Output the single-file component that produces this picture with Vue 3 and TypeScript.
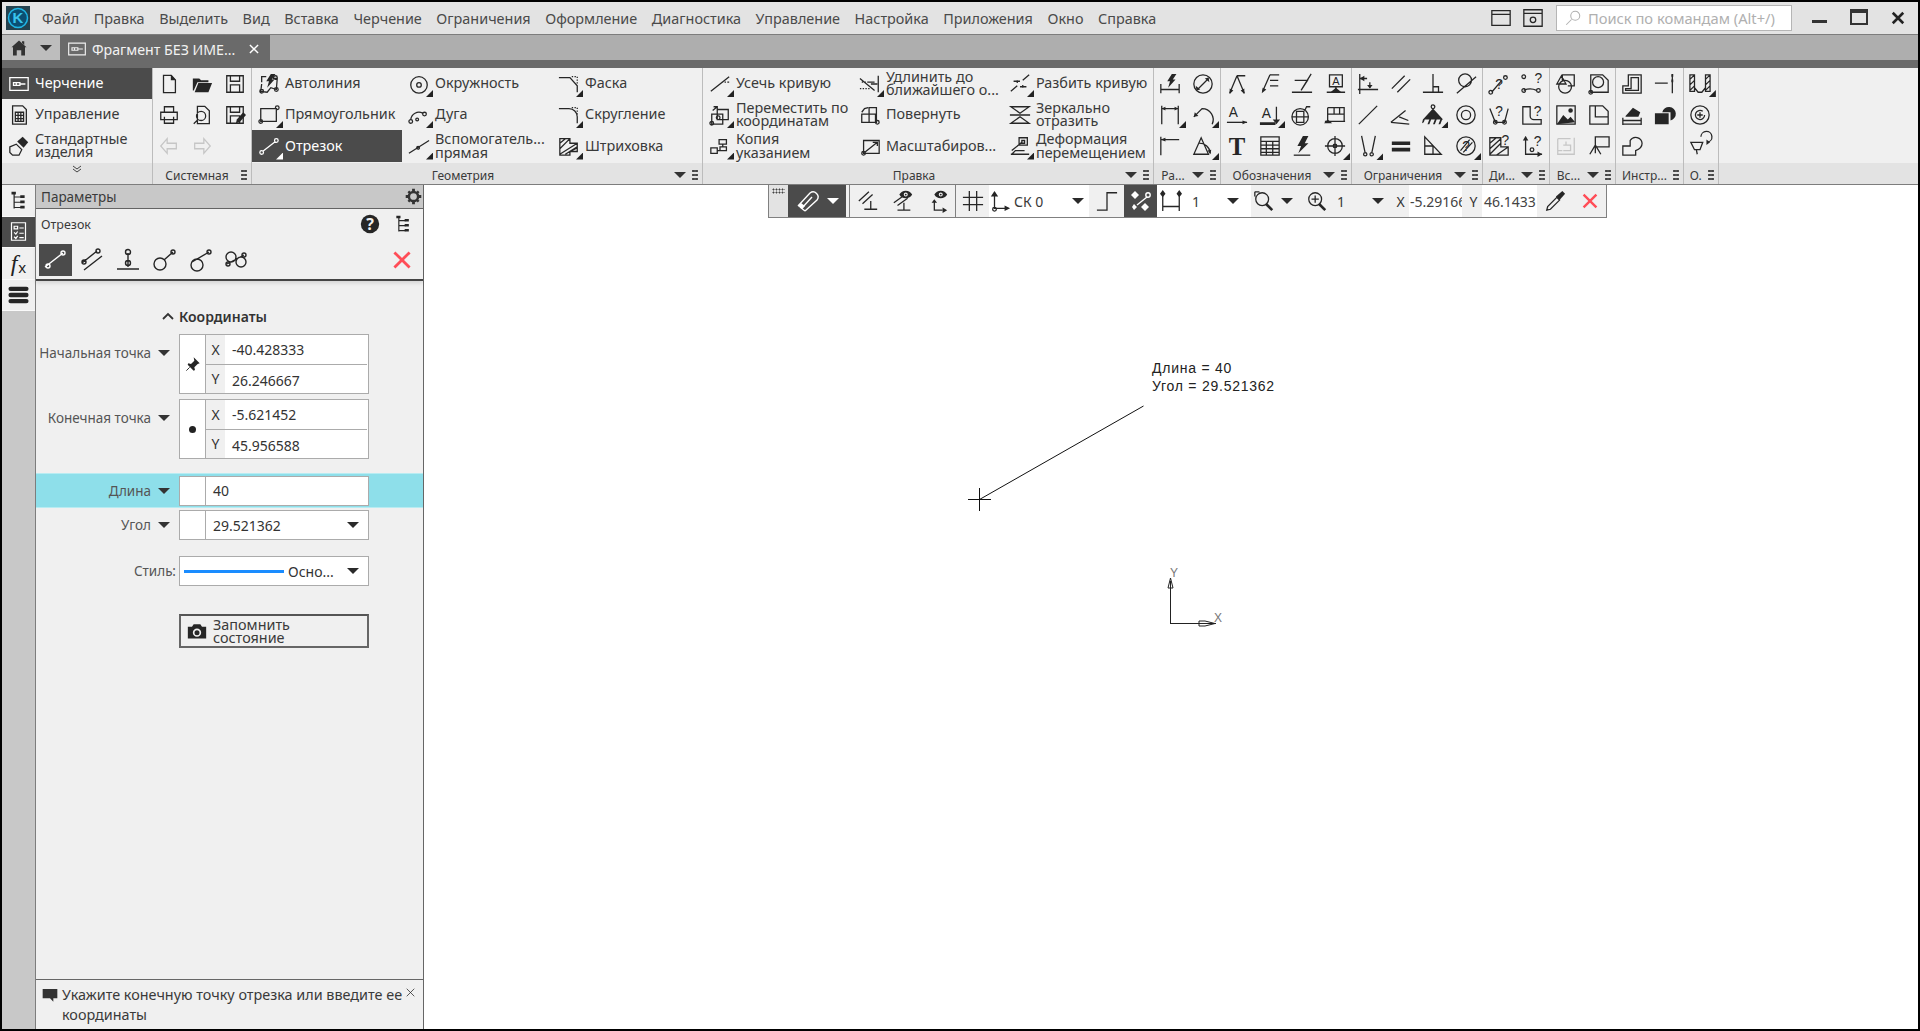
<script setup lang="ts">
import { h } from 'vue'

interface Glyph {
  s?: string
  f?: string
  t?: [string, number, number, number, string?][]
}

const o = (x: number, y: number, r: number) =>
  `M${x - r} ${y}a${r} ${r} 0 1 0 ${2 * r} 0a${r} ${r} 0 1 0 ${-2 * r} 0`

const bolt = 'M14 1h5l-4 6h3l-8 9 2-7h-3z'
const saveBody = 'M3 3h18v18H3zM7 3v6h10V3M7 21v-8h10v8'
const corner = 'M15 4h1.500M18 4h1.500M21 4v1.500M21 7v1.500M21 10v1.500'
const eye = 'M8 5a8 8 0 0 1 14 0 8 8 0 0 1-14 0z' + o(15, 5, 2.200) + o(15, 5, 1)

const glyphs: Record<string, Glyph> = {
  draw: { s: 'M2 5h20v14H2zM6 10.500h7v3H6zM13 12h6M9 10.500v3' },
  manage: { s: 'M5 2h11l4 4v16H5zM8 9h9v10H8zM8 12.500h9M8 16h9M11 9v10M14 9v10' },
  bolt2: { s: 'M2 13l7-3 6 6-3 6H5l-3-3z', f: 'M10 7l6-5 6 6-5 6z' },
  tree: { s: 'M7 3v18M7 8h8M7 14h8M7 20h8', f: 'M4 2h5v3H4zM14 6h5v3h-5zM14 12h5v3h-5zM14 18h5v3h-5z' },
  list: { s: 'M4 2h16v20H4zM7 6h4v3H7zM13 8h5M7 13l2 2 2-3M13 14h5M7 18l2 2 2-3M13 19h5' },
  stack: { f: 'M3 3h18a2 2 0 0 1 0 5H3a2 2 0 0 1 0-5zM3 10h18a2 2 0 0 1 0 5H3a2 2 0 0 1 0-5zM3 17h18a2 2 0 0 1 0 5H3a2 2 0 0 1 0-5z' },
  doc: { s: 'M6 2.500h8.500l4.500 5v14H6z', f: 'M14 2l5.500 6H14z' },
  folder: { f: 'M2 6h7l2 2h8v2H7l-4 9H2zM8 11h15l-4 10H4z' },
  save: { s: saveBody },
  print: { s: 'M7 9V3h10v6M3 9h18v8H3zM7 14v7h10v-7' },
  preview: { s: 'M7 2.500h8l5 5v14H7z' + o(11, 13, 5) + 'M7.500 17L3 21.500' },
  saveas: { s: saveBody, f: 'M14 17l7-8 3 3-7 8-4 1z' },
  undo: { s: 'M10 4L3 12l7 8v-5h10V9H10z' },
  redo: { s: 'M14 4l7 8-7 8v-5H4V9h10z' },
  auto: { s: 'M4 10V4h5M4 12l-1 8 7 1 4-5 6 2 1-12-5 0' + o(4, 20, 2) + o(20, 18, 2) + o(19, 5, 2), f: bolt },
  rect: { s: 'M3 5h17v14H3z' + o(3, 19, 2) + o(21, 4, 2) },
  line: { s: 'M5 18L19 7' + o(4, 19, 2) + o(20, 6, 2) },
  circle: { s: o(12, 13, 9) + o(12, 13, 2.500) },
  arc: { s: 'M3 17a9 9 0 0 1 13-7' + o(3, 19, 2) + o(18, 11, 2) + o(10, 17, 1.500) },
  helper: { s: 'M1 20L23 6' + o(11, 14, 1.500) },
  chamfer: { s: 'M1 5h12l8 9v7' + corner },
  fillet: { s: 'M1 5h11a9 9 0 0 1 9 9v7' + corner },
  hatch: { s: 'M2 4h11v5h8v9h-8v4H2zM2 9l6-5M2 15L13 4M2 21L21 9M8 21l13-8M13 18l8-4' },
  trim: { s: 'M2 20L12 12M14 10h1.500M17 10h1.500M20 10h2M12 12L22 4' },
  extend: { s: 'M1 6l16 13M1 17h1.500M4 17h1.500M7 17h1.500M10 17h1.500M13 12h7M21 3v18M3 10h1.500M6 10h1.500M9 10h8' },
  split: { s: 'M2 20l7-6M15 8l7-6M9 8v3M5 9h7M15 16v-3M12 15h7' },
  move: { s: 'M9 6h12v11H9zM3 11h12v11H3z' + o(10, 15, 2) + o(3, 21, 2) + 'M4 7l5-4M5 3h4v4' },
  rotate: { s: 'M3 11h15v9H3zM11 4h8v16h-8z' + o(20, 20, 2) + 'M3 9l3-4 4-1' },
  copy: { s: 'M11 5h8v5h-8zM2 14h7v6H2zM12 13h7v4h-7zM15 10v3M9 17h3' },
  scale: { s: 'M5 6h17v14H5z' + o(5, 20, 2) + 'M6 19L20 8M15 8h5v4' },
  mirror: { s: 'M2 3h20L12 10zM2 21h20L12 14zM1 12h22' },
  deform: { s: 'M11 3h9v8h-9zM14 6h3v3h-3zM2 21h20M3 17L14 8M3 21l4-4h10' },
  dimAuto: { s: 'M2 12v10M22 12v10M2 18h20', f: bolt },
  diam: { s: o(12, 12, 10) + 'M6 18L18 6', f: 'M18 5l1 5-5-4zM5 19l-1-5 5 4z' },
  dimLin: { s: 'M3 2v20M21 2v20M3 5h18', f: 'M3 5l4-2v4zM21 5l-4-2v4z' },
  dimRad: { s: 'M2 14L11 5a12 12 0 0 1 11 17', f: 'M2 14l1-5 4 4z' },
  dimBase: { s: 'M2 2v20M2 5h20', f: 'M2 5l5-2v4z' },
  dimAng: { s: 'M2 21h16L10 3zM7 9a12 12 0 0 1 13 11', f: 'M20 21l-3-4 4-1z' },
  rough: { s: 'M12 3h9M12 3L4 22M12 3l8 19', f: 'M4 23l0-6 4 2zM20 23l-4-4 4-2z' },
  leader: { s: 'M12 2L4 20M12 2h10M12 8h9M12 14h9', f: 'M3 22l1-6 4 2z' },
  tick: { s: 'M1 21h22M4 8h14l-7 11M22 1l-11 18' },
  base: { s: 'M6 2h14v13H6zM13 15v4M3 21h20', f: 'M13 16l-6 5h12z', t: [['A', 13, 13, 12]] },
  textA: { s: 'M1 20h22', f: 'M23 20l-5-2v4z', t: [['A', 8, 14, 15]] },
  textB: { s: 'M19 3v17', f: 'M1 20h17v3H1zM19 22l-4-5h8z', t: [['A', 8, 15, 15]] },
  mark: { s: o(10, 14, 9) + 'M6 8h8v12H6zM1 14h18M15 7l2-4h4' },
  flag: { s: 'M4 4h18v15M4 4v15M11 4v7M17 4v7M4 11h18M1 19h22', f: 'M0 21l4-4 5 4z' },
  bigT: { t: [['T', 12, 22, 27]] },
  table: { s: 'M2 2h20v20H2zM2 7h20M2 11h20M2 15h20M2 19h20M8 7v15M15 7v15' },
  boltBase: { s: 'M3 22h18', f: 'M13 1h6l-4 8h4L8 20l3-8H7z' },
  target: { s: o(12, 12, 8) + 'M12 1v22M1 12h22' + o(12, 12, 2) },
  cFix: { s: 'M3 1v22M1 18h22M3 6h8M14 10v6', f: 'M3 6l5-3v6zM14 17l-3-4h6z' },
  cParallel: { s: 'M2 17L16 3M8 21L22 7' },
  cPerp: { s: 'M1 21h22M12 1v20M12 15h6v6' },
  cTangent: { s: o(11, 8, 7) + 'M2 22L23 4' },
  cLine: { s: 'M2 22L22 2' },
  cAngle: { s: 'M1 20L17 7M1 20l20 2M10 14l10 4' },
  cAnchor: { s: o(12, 3, 2), f: 'M12 5L1 17h22zM1 17l-1 4 2-1 1-3zM8 17l-2 5h2l2-5zM14 17l-2 5h2l2-5zM20 17l-2 5h2l2-5z' },
  cRing: { s: o(12, 12, 10) + o(12, 12, 5) },
  cDown: { s: 'M5 1l4 19M20 1l-4 19' + o(9, 21, 1.800) + o(16, 21, 1.800) },
  cEq: { f: 'M2 7h20v4H2zM2 14h20v4H2z' },
  cTri: { s: 'M3 2v19h18zM3 12h9v9' },
  cBadge: { s: o(12, 12, 10) + 'M6 17L16 5M9 19L19 8', t: [['?', 12, 17, 15]] },
  qPoints: { s: 'M4 21L15 8' + o(3, 21, 2) + o(19, 5, 2), t: [['?', 12, 17, 15]] },
  qCurve: { s: 'M3 19a16 16 0 0 1 14 0' + o(3, 4, 2) + o(3, 19, 2) + o(19, 19, 2), t: [['?', 19, 11, 15]] },
  qNet: { s: 'M2 5l6 15h10l4-15' + o(8, 20, 2) + o(18, 20, 2), t: [['?', 12, 13, 15]] },
  qShape: { s: 'M2 3h8v10a4 4 0 0 0 4 4h8v5H2z', t: [['?', 18, 13, 15]] },
  qHatch: { s: 'M2 3h12v10h8v9H2zM2 9l7-6M2 15L14 4M2 21L14 9M9 22l13-9', t: [['?', 19, 11, 15]] },
  qAxes: { s: 'M5 2v19h18' + o(12, 16, 2), f: 'M5 1l3 5H2zM23 21l-5 3v-6z', t: [['?', 18, 12, 15]] },
  vShapes: { s: 'M8 9V2h13v12h-7' + o(11, 15, 7) + 'M2 12l5-9 5 9z' },
  vPage: { s: 'M3 2h13l6 6v13H3z' + o(11, 10, 6) + o(3, 21, 2) },
  vImage: { s: 'M2 2h20v20H2z', f: 'M2 22l7-10 5 5 3-3 5 6z' + o(17, 7, 2.500) },
  vFrag: { s: 'M2 2h14l6 6v14H2zM8 2v12h14' },
  vOff: { s: 'M3 4h14M21 3v18H3V4M9 11h8v6H9M12 11V7M3 17h5' },
  vFlag: { s: 'M8 2h15v11H8zM8 2v18M2 21l6-10 6 10' },
  iOffset: { s: 'M8 2h14v20H2v-8h6zM11 5h8v14H5v-2h6z' },
  iBreak: { s: 'M1 11h14M20 2v20', f: 'M19 1h2v3h-2zM19 7h2v3h-2z' },
  iHatchDim: { s: 'M2 22h20M2 15v8M22 15v8M2 18h20', f: 'M5 13l8-9 8 5-2 5H5z' },
  iSolid: { f: 'M1 10h15v12H1zM9 9a7.500 7.500 0 1 1 9 9V9z' },
  iShape: { s: 'M2 12h8V6a7 7 0 0 1 13 3c0 5-4 7-7 8v5H2z' },
  oHole: { s: 'M1 2h5v18H1zM18 2h5v18h-5zM6 2v14l4 5h4l4-5V2M1 7l5-5M1 13l5-5M1 19l5-5M18 7l5-5M18 13l5-5M18 19l5-5' },
  oSpiral: { s: o(12, 12, 10) + 'M17 12a5 5 0 1 1-2-4M9 12h6M12 9v6' },
  oRot: { s: 'M2 8h13l-3 8H6zM8 16l1 5M13 2a6 6 0 1 1 7 6', f: 'M23 8l-4 3V5z' },
  mStraight: { s: 'M1 19L19 5' + o(4, 18, 2) + o(19, 5, 2) },
  mParallel: { s: 'M2 15L17 3M4 22L22 8' + o(4, 14, 2) + o(18, 3, 2) },
  mPerp: { s: 'M12 5v14M1 21h22' + o(12, 4, 2.500) + o(12, 15, 2.500) },
  mTan: { s: 'M12 12L21 4' + o(8, 16, 6) + o(21, 4, 2) },
  mTan2: { s: 'M4 14L21 4' + o(9, 17, 6) + o(21, 4, 2) },
  mBoth: { s: 'M3 16L20 7' + o(7, 9, 5) + o(17, 14, 5) + o(4, 16, 2) + o(20, 7, 2) },
  magnet: { s: 'M3 17L15 4a5 5 0 0 1 7 7L10 22M7 19L17 8M5 18l5 4', f: 'M3 17l4 3 3-3-4-3z' },
  tbA: { s: 'M2 12L13 2M6 15L17 5M8 21h14M15 12v9' },
  tbB: { s: 'M2 14L13 6M6 17L17 9M6 22h14M13 14v8', f: eye },
  tbC: { s: 'M8 12v10h9', f: 'M8 10l3 4H5zM22 22l-5 3v-6z' + eye },
  grid: { s: 'M8 1v22M16 1v22M1 8h22M1 16h22' },
  axes: { s: 'M6 3v17h15' + o(6, 21, 2), f: 'M6 1l4 6H2zM23 20l-6 3v-6z' },
  step: { s: 'M1 22h11V3h11' },
  snap: { s: 'M8 16L18 8' + o(19, 6, 2.200), f: 'M6 2l4 4-4 4-4-4zM16 14l4 4-4 4-4-4zM5 15l3 3-3 3-2-3z' },
  ortho: { s: 'M3 4v19M21 4v19M3 18h18', f: 'M3 0l3 4-3 4-3-4zM21 0l3 4-3 4-3-4z' },
  zoomWin: { s: o(10, 10, 7) + 'M2 2h5M2 2v5', f: 'M15 14l7 7-2 2-7-7z' },
  zoomIn: { s: o(10, 10, 7) + 'M6 10h8M10 6v8', f: 'M15 14l7 7-2 2-7-7z' },
  dropper: { s: 'M3 22l1-4 10-10 3 3-10 10z', f: 'M13 7l7-6 3 3-6 7z' },
  pin: { f: 'M13 2l9 9-3 1-5 5 1 4-2 1-9-9 1-2 4 1 5-5z', s: 'M7 17l-5 5' },
  help: { f: 'M12 1a11 11 0 1 1 0 22 11 11 0 0 1 0-22z' },
  camera: { f: 'M8 4h8l2 3h5v14H1V7h5z' + o(12, 14, 5) + o(12, 14, 3) },
  note: { f: 'M1 3h22v14h-6v5l-5-5H1z' },
  search: { s: o(15, 9, 6) + 'M10 14l-7 7' },
  cog: { s: o(12, 12, 6.500), f: 'M10 1h4v5h-4zM10 18h4v5h-4zM1 10h5v4H1zM18 10h5v4h-5zM3.500 6L6 3.500 9 7 7 9zM18 3.500L20.500 6 17 9l-2-2zM3.500 18L7 15l2 2-3 3.500zM15 17l2-2 3.500 3L18 20.500z' },
  win: { s: 'M2 4h20v16H2zM2 8h20' },
  winCog: { s: 'M2 3h20v18H2zM2 7h20' + o(12, 14, 3) },
  home: { f: 'M12 2l10 9h-2v11h-5v-7H9v7H4V11H2zM16 3h3v5l-3-3z' },
  cross: { s: 'M5 5l14 14M19 5L5 19' },
}

const Ic = (props: { n: string }) => {
  const g = glyphs[props.n] ?? {}
  const kids = []
  if (g.f) kids.push(h('path', { d: g.f, fill: 'currentColor', 'fill-rule': 'evenodd' }))
  if (g.s) kids.push(h('path', { d: g.s, fill: 'none', stroke: 'currentColor', 'stroke-width': 1.400 }))
  for (const [txt, x, y, size, fam] of g.t ?? []) {
    kids.push(h('text', {
      x, y, fill: 'currentColor', 'font-size': size, 'text-anchor': 'middle',
      'font-family': fam ?? (txt === 'T' ? '"Liberation Serif", serif' : '"Liberation Sans", sans-serif'),
      'font-weight': txt === 'T' ? 700 : 400,
    }, txt))
  }
  return h('svg', { viewBox: '0 0 24 24', class: 'ic', width: 24, height: 24, overflow: 'visible' }, kids)
}
Ic.props = ['n']

const menu = ['Файл', 'Правка', 'Выделить', 'Вид', 'Вставка', 'Черчение', 'Ограничения', 'Оформление', 'Диагностика', 'Управление', 'Настройка', 'Приложения', 'Окно', 'Справка']

const nav = [
  { n: 'draw', label: 'Черчение', active: true },
  { n: 'manage', label: 'Управление' },
  { n: 'bolt2', label: 'Стандартные изделия' },
]

type Tool = { n: string; label?: string; tri?: boolean; active?: boolean; off?: boolean }
const T = (n: string, tri = false, off = false): Tool => ({ n, tri, off })
const L = (n: string, label: string, tri = false, active = false): Tool => ({ n, label, tri, active })

const system: Tool[] = [T('doc'), T('print'), T('undo', false, true), T('folder'), T('preview'), T('redo', false, true), T('save'), T('saveas')]

const wide = [
  {
    title: 'Геометрия',
    items: [
      L('auto', 'Автолиния'), L('rect', 'Прямоугольник', true), L('line', 'Отрезок', true, true),
      L('circle', 'Окружность', true), L('arc', 'Дуга', true), L('helper', 'Вспомогатель...\nпрямая', true),
      L('chamfer', 'Фаска', true), L('fillet', 'Скругление', true), L('hatch', 'Штриховка', true),
    ],
  },
  {
    title: 'Правка',
    items: [
      L('trim', 'Усечь кривую', true), L('move', 'Переместить по\nкоординатам', true), L('copy', 'Копия\nуказанием', true),
      L('extend', 'Удлинить до\nближайшего о...', true), L('rotate', 'Повернуть'), L('scale', 'Масштабиров...'),
      L('split', 'Разбить кривую', true), L('mirror', 'Зеркально\nотразить'), L('deform', 'Деформация\nперемещением', true),
    ],
  },
]

const small = [
  { title: 'Ра...', menu: true, cols: 'c33', items: [T('dimAuto'), T('dimLin', true), T('dimBase'), T('diam'), T('dimRad', true), T('dimAng', true)] },
  { title: 'Обозначения', menu: true, cols: '', items: [T('rough'), T('textA'), T('bigT'), T('leader'), T('textB', true), T('table'), T('tick'), T('mark'), T('boltBase'), T('base'), T('flag'), T('target', true)] },
  { title: 'Ограничения', menu: true, cols: '', items: [T('cFix'), T('cLine'), T('cDown', true), T('cParallel'), T('cAngle'), T('cEq'), T('cPerp'), T('cAnchor', true), T('cTri'), T('cTangent'), T('cRing'), T('cBadge', true)] },
  { title: 'Ди...', menu: true, cols: 'c33', items: [T('qPoints'), T('qNet'), T('qHatch'), T('qCurve'), T('qShape'), T('qAxes')] },
  { title: 'Вс...', menu: true, cols: '', items: [T('vShapes'), T('vImage'), T('vOff', false, true), T('vPage'), T('vFrag'), T('vFlag')] },
  { title: 'Инстр...', menu: false, cols: '', items: [T('iOffset'), T('iHatchDim'), T('iShape'), T('iBreak'), T('iSolid')] },
  { title: 'О.', menu: false, cols: 'c33', items: [T('oHole', true), T('oSpiral'), T('oRot')] },
]

const modes = ['mStraight', 'mParallel', 'mPerp', 'mTan', 'mTan2', 'mBoth']

const points = [
  { label: 'Начальная точка', icon: 'pin', x: '-40.428333', y: '26.246667' },
  { label: 'Конечная точка', icon: 'dot', x: '-5.621452', y: '45.956588' },
]
</script>

<template>
  <div class="app">
    <header class="menubar">
      <div class="logo">
        <svg viewBox="0 0 24 24" width="24" height="24">
          <rect width="24" height="24" fill="#24424f" />
          <circle cx="12" cy="12" r="9.500" fill="#0b4f73" stroke="#1fb6e6" stroke-width="1.500" />
          <text x="12" y="17" text-anchor="middle" font-size="15" font-weight="700" fill="#39c4ee" font-family="Liberation Sans, sans-serif">K</text>
        </svg>
      </div>
      <nav class="menu">
        <span v-for="m in menu" :key="m">{{ m }}</span>
      </nav>
      <div class="menu-right">
        <Ic n="win" class="win-ic" />
        <Ic n="winCog" class="win-ic" />
        <div class="search"><Ic n="search" class="search-ic" /><span>Поиск по командам (Alt+/)</span></div>
        <span class="wbtn min"></span>
        <span class="wbtn restore"></span>
        <Ic n="cross" class="close-ic" />
      </div>
    </header>

    <div class="tabs">
      <div class="home"><Ic n="home" class="home-ic" /><i class="arrow"></i></div>
      <div class="tab"><Ic n="draw" class="tab-ic" /><span>Фрагмент БЕЗ ИМЕ...</span><Ic n="cross" class="tab-x" /></div>
    </div>

    <section class="ribbon">
      <div class="nav">
        <div class="nav-items">
          <div v-for="i in nav" :key="i.n" class="nav-item" :class="{ active: i.active }">
            <Ic :n="i.n" class="nav-ic" /><span>{{ i.label }}</span>
          </div>
        </div>
        <div class="nav-more">
          <svg width="10" height="8" viewBox="0 0 10 8"><path d="M1 1l4 3 4-3M1 4l4 3 4-3" fill="none" stroke="#444" /></svg>
        </div>
      </div>

      <div class="group">
        <div class="g-body icons sys">
          <div v-for="t in system" :key="t.n" class="tool" :class="{ off: t.off }"><Ic :n="t.n" /></div>
        </div>
        <div class="g-foot"><span class="g-title">Системная</span><i class="grip"></i></div>
      </div>

      <div v-for="g in wide" :key="g.title" class="group">
        <div class="g-body wides">
          <div v-for="t in g.items" :key="t.n" class="wtool" :class="{ active: t.active }">
            <span class="w-ic"><Ic :n="t.n" /><i v-if="t.tri" class="tri"></i></span>
            <span class="w-label">{{ t.label }}</span>
          </div>
        </div>
        <div class="g-foot"><span class="g-title">{{ g.title }}</span><i class="arrow"></i><i class="grip"></i></div>
      </div>

      <div v-for="g in small" :key="g.title" class="group">
        <div class="g-body icons" :class="g.cols">
          <div v-for="t in g.items" :key="t.n" class="tool" :class="{ off: t.off }">
            <Ic :n="t.n" /><i v-if="t.tri" class="tri"></i>
          </div>
        </div>
        <div class="g-foot"><span class="g-title">{{ g.title }}</span><i v-if="g.menu" class="arrow"></i><i class="grip"></i></div>
      </div>

      <div class="ribbon-rest"><div class="rest-foot"></div></div>
    </section>

    <main class="work">
      <aside class="rail">
        <div class="rail-item"><Ic n="tree" /></div>
        <div class="rail-item active"><Ic n="list" /></div>
        <div class="rail-item fx"><em>f</em><span>x</span></div>
        <div class="rail-item"><Ic n="stack" /></div>
      </aside>

      <div class="panel">
        <div class="p-head"><span>Параметры</span><Ic n="cog" class="cog" /></div>
        <div class="p-tool">
          <div class="p-name">
            <span>Отрезок</span>
            <span class="help"><Ic n="help" /><b>?</b></span>
            <Ic n="tree" class="p-tree" />
          </div>
          <div class="p-modes">
            <div v-for="(m, i) in modes" :key="m" class="mode" :class="{ active: i === 0 }"><Ic :n="m" /></div>
            <Ic n="cross" class="red-x" />
          </div>
        </div>

        <div class="form">
          <div class="section">
            <svg width="12" height="8" viewBox="0 0 12 8"><path d="M1 7l5-5 5 5" fill="none" stroke="#333" stroke-width="1.800" /></svg>
            <span>Координаты</span>
          </div>

          <div v-for="p in points" :key="p.label" class="row point">
            <div class="lab top"><span>{{ p.label }}</span><i class="arrow"></i></div>
            <div class="box">
              <div class="mark">
                <Ic v-if="p.icon === 'pin'" n="pin" class="pin" />
                <i v-else class="dot"></i>
              </div>
              <div class="coords">
                <div class="coord"><b>X</b><span>{{ p.x }}</span></div>
                <div class="coord"><b>Y</b><span>{{ p.y }}</span></div>
              </div>
            </div>
          </div>

          <div class="row band">
            <div class="lab"><span>Длина</span><i class="arrow"></i></div>
            <div class="box single"><div class="mark"></div><span class="val">40</span></div>
          </div>
          <div class="row angle">
            <div class="lab"><span>Угол</span><i class="arrow"></i></div>
            <div class="box single"><div class="mark"></div><span class="val">29.521362</span><i class="arrow dark"></i></div>
          </div>
          <div class="row style">
            <div class="lab plain"><span>Стиль:</span></div>
            <div class="box single style-box"><i class="stroke"></i><span class="val2">Осно...</span><i class="arrow dark"></i></div>
          </div>
          <div class="row remember">
            <div class="lab"></div>
            <button class="btn" type="button"><Ic n="camera" class="cam" /><span>Запомнить состояние</span></button>
          </div>
        </div>

        <div class="status">
          <Ic n="note" class="note" />
          <p>Укажите конечную точку отрезка или введите ее координаты</p>
          <Ic n="cross" class="st-x" />
        </div>
      </div>

      <div class="canvas">
        <div class="floatbar">
          <div class="fb-grip"><i></i></div>
          <div class="fb-dark magnet"><Ic n="magnet" /><i class="arrow light"></i></div>
          <div class="fb-ic first"><Ic n="tbA" /></div>
          <div class="fb-ic"><Ic n="tbB" /></div>
          <div class="fb-ic last"><Ic n="tbC" /></div>
          <div class="fb-ic grid"><Ic n="grid" /></div>
          <div class="fb-field sk"><Ic n="axes" /><span>СК 0</span><i class="arrow dark"></i></div>
          <div class="fb-ic"><Ic n="step" /></div>
          <div class="fb-dark snap"><Ic n="snap" /></div>
          <div class="fb-field ortho"><Ic n="ortho" /><span>1</span><i class="arrow dark"></i></div>
          <div class="fb-field zoomw"><Ic n="zoomWin" /><i class="arrow dark"></i></div>
          <div class="fb-field zoomi"><Ic n="zoomIn" /><span>1</span><i class="arrow dark"></i></div>
          <span class="fb-lab">X</span><span class="fb-input x">-5.29166</span>
          <span class="fb-lab">Y</span><span class="fb-input y">46.1433</span>
          <div class="fb-ic"><Ic n="dropper" /></div>
          <div class="fb-ic"><Ic n="cross" class="red-x small" /></div>
        </div>

        <svg class="sketch" width="1494" height="845" viewBox="424 185 1494 845">
          <path d="M979.500 499.500L1143.500 406" fill="none" stroke="#111" />
          <path d="M968 499.500h23M979.500 488v23" fill="none" stroke="#111" shape-rendering="crispEdges" />
          <path d="M1170.500 581v42.500h45" fill="none" stroke="#222" shape-rendering="crispEdges" />
          <path d="M1170.500 578l-2.500 10h5zM1205 621h-6v5h6l10-2.500z" fill="none" stroke="#222" />
        </svg>
        <div class="note-text"><div>Длина = 40</div><div>Угол = 29.521362</div></div>
        <span class="axis y">Y</span>
        <span class="axis x">X</span>
      </div>
    </main>
  </div>
</template>

<style>
html, body { margin: 0; background: #000; }
</style>

<style scoped>
.app {
  width: 1920px;
  height: 1031px;
  box-sizing: border-box;
  border: 2px solid #000;
  display: flex;
  flex-direction: column;
  overflow: hidden;
  background: #f0f0f0;
  font-family: "Noto Sans", "Open Sans", sans-serif;
  font-size: 14.400px;
  color: #3a3a3a;
}
.ic { display: block; flex: none; color: #262626; }
i { display: block; flex: none; }

.arrow {
  width: 0;
  height: 0;
  border-left: 6px solid transparent;
  border-right: 6px solid transparent;
  border-top: 6px solid #333;
}
.arrow.dark { border-top-color: #2a2a2a; }
.arrow.light { border-top-color: #fff; }

/* top menu */
.menubar {
  height: 32px;
  flex: none;
  display: flex;
  align-items: center;
  background: #e3e3e3;
  border-bottom: 1px solid #7d7d7d;
}
.logo { margin-left: 4px; width: 24px; height: 24px; }
.menu { display: flex; gap: 14.600px; margin-left: 12px; color: #4a4a4a; }
.menu-right { margin-left: auto; display: flex; align-items: center; }
.win-ic { width: 22px; height: 22px; margin-right: 10px; }
.search {
  width: 236px;
  height: 26px;
  margin-left: 2px;
  box-sizing: border-box;
  background: #fff;
  border: 1px solid #b5b5b5;
  display: flex;
  align-items: center;
  gap: 6px;
  padding-left: 7px;
  color: #b0b0b0;
  font-size: 14.700px;
  white-space: nowrap;
}
.search-ic { width: 18px; height: 18px; color: #b0b0b0; }
.wbtn { display: block; flex: none; }
.min { width: 15px; height: 3px; background: #333; margin: 6px 0 0 20px; }
.restore {
  width: 14px;
  height: 10px;
  margin: -2px 0 0 23px;
  border: 2px solid #333;
  border-top-width: 4px;
  background: #e3e3e3;
}
.close-ic { width: 18px; height: 18px; margin: 0 11px 0 21px; color: #222; }
.close-ic :deep(path) { stroke-width: 3.500; }

/* document tabs */
.tabs {
  height: 25px;
  flex: none;
  display: flex;
  background: #aeaeae;
}
.home {
  width: 58px;
  background: #bdbdbd;
  display: flex;
  align-items: center;
  gap: 12px;
  padding-left: 8px;
  box-sizing: border-box;
}
.home-ic { width: 18px; height: 18px; color: #333; }
.tab {
  width: 210px;
  background: #6a6a6a;
  color: #f2f2f2;
  display: flex;
  align-items: center;
  padding: 3px 0 0 7px;
  box-sizing: border-box;
  font-size: 14.200px;
  white-space: nowrap;
}
.tab-ic { width: 20px; height: 20px; color: #eee; margin-right: 5px; }
.tab-x { width: 14px; height: 14px; color: #fff; margin-left: 12px; }
.tab-x :deep(path) { stroke-width: 2.500; }

/* ribbon */
.ribbon {
  height: 116px;
  flex: none;
  display: flex;
  margin-top: 8px;
  border-bottom: 1px solid #7d7d7d;
  box-shadow: 0 -8px 0 #6a6a6a;
  background: #f0f0f0;
}
.nav {
  width: 150px;
  flex: none;
  display: flex;
  flex-direction: column;
  border-right: 1px solid #bcbcbc;
}
.nav-items { height: 95px; }
.nav-item {
  height: 31px;
  display: flex;
  align-items: center;
  gap: 5px;
  padding-left: 6px;
  line-height: 13.500px;
}
.nav-item span { width: 110px; margin-top: -1px; }
.nav-ic { width: 22px; height: 22px; }
.nav-item.active { background: #4b4b4b; color: #fff; }
.nav-item.active .ic { color: #fff; }
.nav-more {
  flex: 1;
  background: #e3e3e3;
  display: flex;
  justify-content: center;
  padding-top: 2px;
}
.group {
  flex: none;
  display: flex;
  flex-direction: column;
  border-right: 1px solid #bcbcbc;
}
.g-body { height: 95px; display: grid; grid-auto-flow: column; grid-template-rows: 31px 31px 32px; }
.icons { grid-auto-columns: 32.500px; }
.icons.c33 { grid-auto-columns: 33px; }
.icons.sys { grid-auto-columns: 32.670px; }
.wides { grid-auto-columns: 150px; }
.tool {
  position: relative;
  display: flex;
  align-items: center;
  justify-content: center;
}
.tool .ic, .w-ic .ic { width: 22px; height: 22px; }
.tool.off .ic { color: #c6c6c6; }
.tri {
  position: absolute;
  width: 7px;
  height: 7px;
  background: #222;
  clip-path: polygon(100% 0, 100% 100%, 0 100%);
}
.tool .tri { right: 1px; bottom: 2px; }
.g-foot {
  flex: 1;
  background: #e3e3e3;
  display: flex;
  align-items: center;
  padding: 3px 4px 0 6px;
  gap: 6px;
  font-size: 12px;
  white-space: nowrap;
}
.g-title { flex: 1; text-align: center; }
.grip {
  width: 6px;
  height: 12px;
  background: radial-gradient(circle, #444 1.100px, transparent 1.300px) 0 0 / 3px 4px;
}
.wtool { display: flex; align-items: center; line-height: 13.500px; }
.wtool.active { background: #4b4b4b; color: #fff; }
.wtool.active .ic { color: #fff; }
.wtool.active .tri { background: #fff; }
.w-ic {
  position: relative;
  flex: none;
  width: 33px;
  height: 31px;
  display: flex;
  align-items: center;
  padding-left: 6px;
  box-sizing: border-box;
}
.w-ic .tri { left: 24px; bottom: 2px; }
.w-label { width: 117px; white-space: pre-line; margin-top: -1px; }
.ribbon-rest { flex: 1; display: flex; flex-direction: column; justify-content: flex-end; }
.rest-foot { height: 21px; background: #e3e3e3; }

/* work area */
.work { flex: 1; min-height: 0; display: flex; }
.rail {
  width: 33px;
  flex: none;
  background: #c8c8c8;
  border-right: 1px solid #7d7d7d;
}
.rail-item {
  height: 31.500px;
  box-sizing: border-box;
  background: #f0f0f0;
  border-bottom: 1px solid #fafafa;
  display: flex;
  align-items: center;
  justify-content: center;
}
.rail-item .ic { width: 21px; height: 21px; }
.rail-item.active { background: #4b4b4b; }
.rail-item.active .ic { color: #fff; }
.fx { font-family: "Liberation Serif", serif; font-size: 24px; color: #222; line-height: 1; }
.fx span { font-family: "Noto Sans", sans-serif; font-size: 15px; margin: 8px 0 0 1px; }

.panel {
  width: 387px;
  flex: none;
  display: flex;
  flex-direction: column;
  background: #f0f0f0;
  border-right: 1px solid #666;
}
.p-head {
  height: 23px;
  flex: none;
  background: #c8c8c8;
  border-bottom: 1px solid #666;
  display: flex;
  align-items: center;
  justify-content: space-between;
  padding: 0 1px 0 5px;
  font-size: 13.500px;
}
.cog { width: 17px; height: 17px; color: #333; }
.cog :deep(path:last-child) { stroke-width: 3.500; }
.p-tool {
  height: 70px;
  flex: none;
  border-bottom: 2px solid #444;
  box-shadow: 0 2px 4px rgba(0, 0, 0, 0.12);
}
.p-name {
  height: 30px;
  display: flex;
  align-items: center;
  padding-left: 5px;
  font-size: 12.500px;
}
.p-name > span:first-child { margin-right: auto; }
.help { position: relative; width: 20px; height: 20px; margin-right: 13px; }
.help .ic { width: 20px; height: 20px; }
.help b {
  position: absolute;
  inset: 0;
  color: #f0f0f0;
  text-align: center;
  line-height: 20px;
  font-size: 16px;
}
.p-tree { width: 20px; height: 20px; margin-right: 10px; }
.p-modes { display: flex; gap: 3px; padding: 5px 0 0 3px; align-items: center; }
.mode {
  width: 33px;
  height: 32px;
  display: flex;
  align-items: center;
  justify-content: center;
}
.mode.active { background: #4b4b4b; }
.mode.active .ic { color: #fff; }
.red-x { margin-left: auto; margin-right: 8px; width: 26px; height: 26px; color: #ff4d57; }
.red-x :deep(path) { stroke-width: 2.600; }
.red-x.small { margin: 0; width: 24px; height: 24px; }

.form { padding-top: 23px; }
.section {
  height: 24px;
  display: flex;
  align-items: center;
  padding-left: 126px;
  gap: 5px;
  font-size: 14px;
  font-weight: 600;
  color: #333;
  margin-bottom: 6px;
}
.row { display: flex; align-items: center; }
.point { align-items: flex-start; margin-bottom: 5px; height: 60px; }
.lab {
  width: 143px;
  flex: none;
  display: flex;
  align-items: center;
  justify-content: flex-end;
  gap: 7px;
  padding-right: 9px;
  box-sizing: border-box;
  color: #555;
  font-size: 13.500px;
  white-space: nowrap;
}
.lab.top { margin-top: 10px; }
.lab.plain { padding-right: 3px; }
.box {
  width: 190px;
  box-sizing: border-box;
  background: #fff;
  border: 1px solid #ababab;
  display: flex;
  color: #333;
  font-size: 14px;
}
.point .box { height: 60px; }
.mark {
  width: 25px;
  flex: none;
  border-right: 1px solid #ababab;
  display: flex;
  align-items: center;
  justify-content: center;
}
.pin { width: 16px; height: 16px; }
.dot { width: 7px; height: 7px; border-radius: 50%; background: #222; }
.coords { flex: 1; display: flex; flex-direction: column; }
.coord { flex: 1; display: flex; align-items: center; }
.coord + .coord { border-top: 1px solid #ababab; margin-right: 1px; }
.coord b {
  width: 19px;
  align-self: stretch;
  display: flex;
  align-items: center;
  justify-content: center;
  background: #f0f0f0;
  font-weight: 400;
}
.coord span { padding: 1px 0 0 7px; }
.coord + .coord span { padding-top: 3px; }
.band {
  margin-top: 14px;
  height: 35px;
  background: #8edfea;
  border-top: 1px solid #b8ecf2;
  border-bottom: 1px solid #b8ecf2;
  box-sizing: border-box;
}
.single { height: 30px; align-items: stretch; }
.single.style-box { align-items: center; }
.val { padding-left: 7px; flex: 1; align-self: center; }
.single .arrow { align-self: center; margin-right: 9px; }
.angle { margin-top: 2px; }
.style { margin-top: 16px; }
.stroke { width: 100px; height: 3px; background: #1a8cff; margin-left: 4px; }
.val2 { margin-left: 4px; flex: 1; }
.remember { margin-top: 28px; }
.btn {
  width: 190px;
  height: 34px;
  padding: 0 0 0 6px;
  background: #f0f0f0;
  border: 2px solid #666;
  border-top-color: #555;
  display: flex;
  align-items: center;
  gap: 6px;
  font: inherit;
  line-height: 13px;
  color: #3a3a3a;
  text-align: left;
}
.btn span { width: 100px; }
.cam { width: 20px; height: 20px; }

.status {
  margin-top: auto;
  height: 50px;
  box-sizing: border-box;
  border-top: 1px solid #666;
  display: flex;
  align-items: flex-start;
  padding: 5px 6px 0 6px;
  line-height: 20px;
}
.status p { margin: 0; flex: 1; padding-left: 4px; }
.note { width: 16px; height: 16px; margin-top: 2px; color: #333; }
.st-x { width: 13px; height: 13px; margin-top: 1px; }

/* canvas */
.canvas { position: relative; flex: 1; background: #fff; }
.floatbar {
  position: absolute;
  left: 344px;
  top: 0;
  width: 839px;
  height: 33px;
  box-sizing: border-box;
  border: 1px solid #808080;
  border-top: 0;
  background: #f0f0f0;
  display: flex;
  align-items: stretch;
  font-size: 14px;
  z-index: 2;
}
.fb-grip { width: 19px; flex: none; background: #e3e3e3; padding: 3px 0 0 3px; box-sizing: border-box; }
.fb-grip i {
  width: 13px;
  height: 6px;
  background: radial-gradient(circle, #444 0.900px, transparent 1.100px) 0 0 / 3px 3px;
}
.fb-dark { background: #4b4b4b; display: flex; align-items: center; justify-content: center; flex: none; }
.fb-dark .ic { color: #fff; }
.magnet { width: 58px; gap: 8px; margin-right: 3px; }
.snap { width: 33px; }
.fb-ic { width: 35px; flex: none; display: flex; align-items: center; justify-content: center; }
.fb-ic .ic { width: 22px; height: 22px; }
.fb-ic.first { border-left: 1px solid #808080; }
.fb-ic.last { border-right: 1px solid #808080; }
.fb-ic.grid { width: 33px; }
.fb-field { background: #fff; display: flex; align-items: center; flex: none; }
.fb-field .ic { width: 22px; height: 22px; }
.sk { width: 100px; gap: 3px; }
.sk .arrow { margin-left: auto; margin-right: 5px; }
.ortho { width: 94px; gap: 10px; padding-left: 3px; box-sizing: border-box; }
.ortho .arrow { margin-left: auto; margin-right: 12px; }
.zoomw { width: 55px; padding-left: 2px; box-sizing: border-box; background: #f0f0f0; gap: 6px; }
.zoomi { width: 86px; background: #f0f0f0; gap: 9px; }
.zoomi .arrow { margin-left: auto; margin-right: 8px; }
.fb-lab { width: 17px; flex: none; align-self: center; text-align: center; color: #333; }
.fb-input {
  background: #fff;
  flex: none;
  display: flex;
  align-items: center;
  overflow: hidden;
  white-space: nowrap;
  box-sizing: border-box;
  color: #444;
}
.fb-input.x { width: 53px; margin-right: 3px; padding-left: 1px; }
.fb-input.y { width: 55px; padding-left: 2px; }
.sketch { position: absolute; left: 0; top: 0; display: block; }
.note-text {
  position: absolute;
  left: 728px;
  top: 174px;
  font-family: "Liberation Sans", sans-serif;
  font-size: 14px;
  line-height: 18px;
  letter-spacing: 0.750px;
  color: #222;
}
.axis {
  position: absolute;
  font-family: "Liberation Sans", sans-serif;
  font-size: 12px;
  line-height: 12px;
  color: #777;
}
.axis.y { left: 746px; top: 382px; }
.axis.x { left: 790px; top: 427px; }
</style>
